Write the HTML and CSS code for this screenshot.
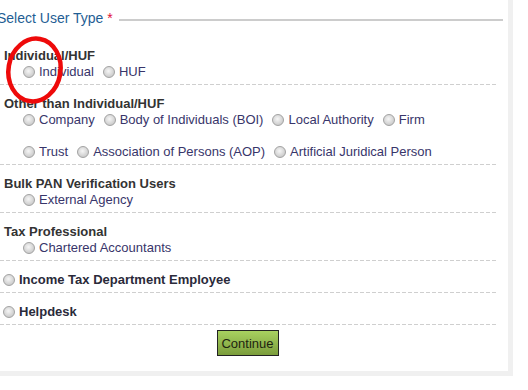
FILE: index.html
```html
<!DOCTYPE html>
<html lang="en">

<head>
    <meta charset="UTF-8">
    <meta name="viewport" content="width=device-width, initial-scale=1.0">
    <title>Select User Type</title>
    <link rel="stylesheet" href="styles.css">
</head>

<body>
    <div class="panel">
        <div class="title">Select User Type <span class="req">*</span></div>

        <div class="group">
            <div class="group-title">Individual/HUF</div>
            <div class="opts">
                <label class="opt"><input type="radio" name="userType">Individual</label>
                <label class="opt"><input type="radio" name="userType">HUF</label>
            </div>
        </div>

        <div class="group">
            <div class="group-title">Other than Individual/HUF</div>
            <div class="opts">
                <label class="opt"><input type="radio" name="userType">Company</label>
                <label class="opt"><input type="radio" name="userType">Body of Individuals (BOI)</label>
                <label class="opt"><input type="radio" name="userType">Local Authority</label>
                <label class="opt"><input type="radio" name="userType">Firm</label>
            </div>
            <div class="opts second">
                <label class="opt"><input type="radio" name="userType">Trust</label>
                <label class="opt"><input type="radio" name="userType">Association of Persons (AOP)</label>
                <label class="opt"><input type="radio" name="userType">Artificial Juridical Person</label>
            </div>
        </div>

        <div class="group">
            <div class="group-title">Bulk PAN Verification Users</div>
            <div class="opts">
                <label class="opt"><input type="radio" name="userType">External Agency</label>
            </div>
        </div>

        <div class="group">
            <div class="group-title">Tax Professional</div>
            <div class="opts">
                <label class="opt"><input type="radio" name="userType">Chartered Accountants</label>
            </div>
        </div>

        <div class="group">
            <label class="opt single"><input type="radio" name="userType">Income Tax Department Employee</label>
        </div>

        <div class="group">
            <label class="opt single"><input type="radio" name="userType">Helpdesk</label>
        </div>

        <div class="actions">
            <button class="continue-btn">Continue</button>
        </div>

        <!-- red hand-drawn mark over the first option -->
        <svg class="mark" width="80" height="120" viewBox="0 0 80 120">
            <ellipse cx="34.5" cy="70" rx="26" ry="31.5" transform="rotate(10 34.5 70)" fill="none" stroke="#ee0a0a" stroke-width="4.5" />
        </svg>
    </div>
</body>

</html>
```

FILE: styles.css
```css
body {
    margin: 0;
    background: #fff;
    font-family: 'Liberation Sans', Arial, sans-serif;
    font-size: 13px;
}

.panel {
    position: relative;
    width: 508px;
    padding: 9px 0 15px 0;
    border-right: 5px solid #f0f0f0;
    border-bottom: 5px solid #f0f0f0;
}

.title {
    display: flex;
    align-items: center;
    margin: 0 5px 10px -3px;
    font-size: 14px;
    line-height: 18px;
    color: #1f5e94;
    white-space: pre;
}

.title .req {
    color: #e0103a;
}

.title::after {
    content: '';
    flex: 1;
    height: 2px;
    margin: 3px 0 0 6px;
    background: #cccccc;
}

/* dashed rule sits in the last pixel of the bottom padding */
.group {
    margin-right: 10px;
    padding: 11px 0 5px 4px;
    line-height: 16px;
    background: repeating-linear-gradient(90deg, #cfcfcf 0 4px, transparent 4px 6px) left bottom / 100% 1px no-repeat;
}

.group-title {
    font-weight: bold;
    color: #333;
}

.opts {
    display: flex;
    flex-wrap: wrap;
    gap: 0 9px;
    padding-left: 19px;
}

.opts.second {
    margin-top: 16px;
}

.opt {
    display: flex;
    align-items: center;
    color: #38356a;
}

.opt input {
    appearance: none;
    -webkit-appearance: none;
    width: 12px;
    height: 12px;
    margin: 0 4px 0 0;
    border: 1px solid #a2a2a2;
    border-radius: 50%;
    background: radial-gradient(circle at 45% 40%, #f6f6f6 0%, #dcdcdc 45%, #bdbdbd 100%);
}

.opt.single {
    font-weight: bold;
    color: #2a2a3a;
}

.opt.single input {
    margin-left: -1px;
}

.actions {
    padding: 5px 13px 0 0;
    text-align: center;
}

.continue-btn {
    width: 62px;
    height: 26px;
    padding: 0;
    border: 1px solid #222;
    background: linear-gradient(#a8d160, #7b9d3c);
    font-family: 'Liberation Sans', Arial, sans-serif;
    font-size: 13px;
    color: #1e2410;
    cursor: pointer;
}

.continue-btn:hover {
    background: linear-gradient(#b4db6c, #86a946);
}

.mark {
    position: absolute;
    left: 0;
    top: 0;
    pointer-events: none;
}
```
